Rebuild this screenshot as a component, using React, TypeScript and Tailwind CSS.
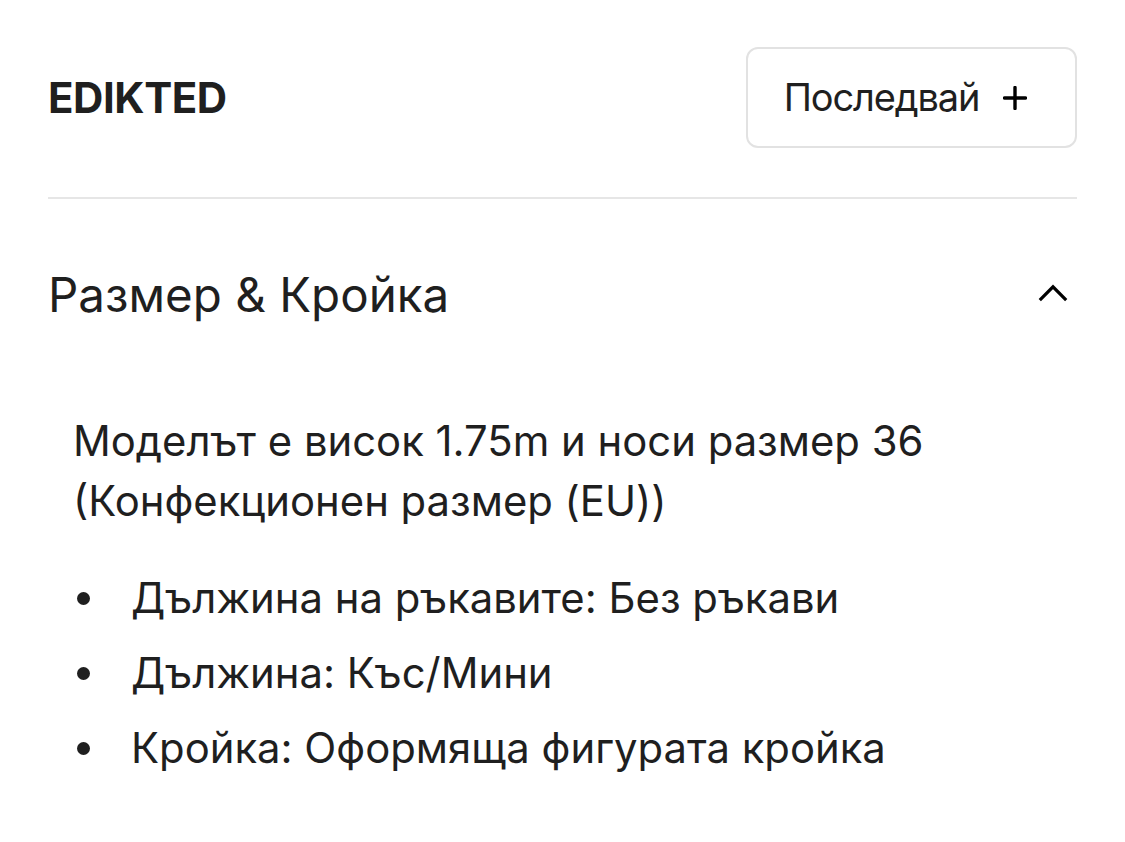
const items = [
  "Дължина на ръкавите: Без ръкави",
  "Дължина: Къс/Мини",
  "Кройка: Оформяща фигурата кройка",
];

export default function App() {
  return (
    <div
      className="min-h-screen bg-white px-12 pt-[47px] text-[#1f1f1f]"
      style={{ fontFamily: "Inter, 'Noto Sans', sans-serif" }}
    >
      {/* brand header */}
      <div className="flex items-center justify-between pb-[49px] border-b-2 border-[#e6e6e6]">
        <span className="text-[42px] font-bold tracking-[-0.01em]">EDIKTED</span>
        <button
          type="button"
          className="flex h-[101px] w-[331px] items-center justify-center gap-[24px] rounded-[12px] border-2 border-[#e2e2e2] pr-[12px] text-[38px] tracking-[-0.03em]"
        >
          <span>Последвай</span>
          <svg width="24" height="24" viewBox="0 0 24 24" className="text-black" aria-hidden>
            <path d="M12 1.5v21M1.5 12h21" stroke="currentColor" strokeWidth="3.4" strokeLinecap="round" />
          </svg>
        </button>
      </div>

      {/* accordion */}
      <div className="flex items-center justify-between pt-[72px]">
        <h2 className="text-[47.5px] font-normal leading-none">Размер &amp; Кройка</h2>
        <svg width="30" height="18" viewBox="0 0 30 18" className="mr-[9px] mt-[-4px] text-black" aria-hidden>
          <path d="M1.8 16.2L15 2.8l13.2 13.4" fill="none" stroke="currentColor" strokeWidth="3.2" />
        </svg>
      </div>

      <div className="pl-[25px] pt-[92px]">
        <p className="text-[41.8px] leading-[60px]">
          Моделът е висок 1.75m и носи размер 36
          <br />
          (Конфекционен размер (EU))
        </p>
        <ul className="mt-[30px] flex flex-col">
          {items.map((t) => (
            <li key={t} className="flex items-center text-[41.8px] leading-[75px]">
              <span className="ml-[4px] mr-[41px] h-[13px] w-[13px] shrink-0 rounded-full bg-[#1f1f1f]" />
              {t}
            </li>
          ))}
        </ul>
      </div>
    </div>
  );
}
